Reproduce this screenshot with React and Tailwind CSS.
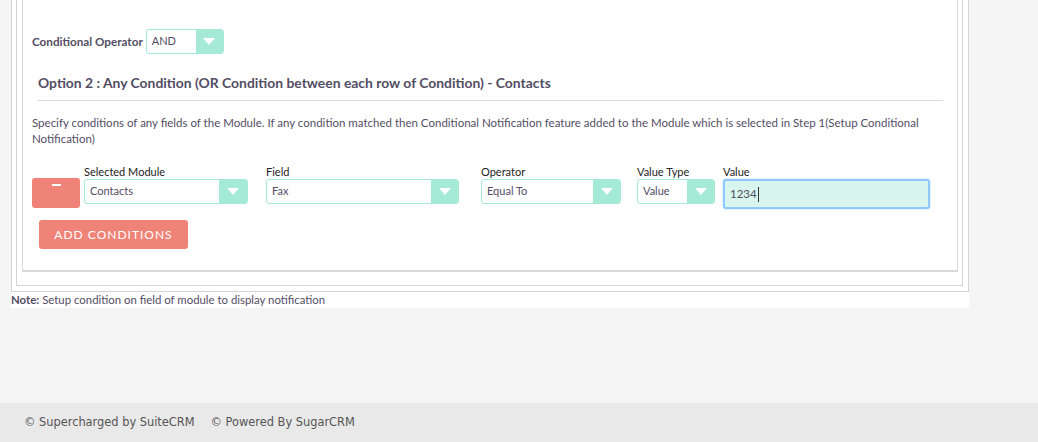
import React from "react";

const textColor = "text-[#534d64]";

function Select({ value, width, arrowWidth = 27 }) {
  return (
    <div
      className="flex h-[25px] overflow-hidden rounded-[3px] border border-[#a5e9d7] bg-white"
      style={{ width }}
    >
      <div className={`flex flex-1 items-center overflow-hidden whitespace-nowrap pl-[5px] text-[11px] ${textColor}`}>
        {value}
      </div>
      <div
        className="flex items-center justify-center bg-[#a5e9d7]"
        style={{ width: arrowWidth }}
      >
        <span className="h-0 w-0 border-x-[6px] border-t-[7px] border-x-transparent border-t-white" />
      </div>
    </div>
  );
}

function Field({ label, children, className = "" }) {
  return (
    <div className={`flex flex-col ${className}`}>
      <div className="h-[14px] text-[11px] leading-[13px] text-[#222]">{label}</div>
      {children}
    </div>
  );
}

function App() {
  return (
    <div
      className="flex min-h-[442px] flex-col bg-[#f5f5f5]"
      style={{ fontFamily: "Lato, 'Noto Sans', sans-serif" }}
    >
      <div className="ml-[11px] w-[958px] bg-white">
        {/* outer box */}
        <div className="border-x border-b border-[#d4d4d4] pb-[5px] pl-[4px] pr-[5px]">
          {/* middle box */}
          <div className="border-x border-b border-[#d4d4d4] pb-[13px] pl-[5px] pr-[4px]">
            {/* inner box */}
            <div className="h-[272px] border-x border-b-2 border-[#d9d9d9] pl-[9px] pr-[14px] pt-[29px]">
              <div className="flex items-center">
                <span className={`mr-[3px] text-[11.7px] font-bold ${textColor}`}>
                  Conditional Operator
                </span>
                <Select value="AND" width={78} />
              </div>

              <div className="ml-[6px] mt-[19px]">
                <h2 className={`text-[13.9px] font-bold leading-[20px] ${textColor}`}>
                  Option 2 : Any Condition (OR Condition between each row of Condition) - Contacts
                </h2>
                <div className="mt-[7px] h-px bg-[#dddddd]" />
              </div>

              <p className={`mt-[14px] pr-[12px] text-[11.5px] leading-[16px] ${textColor}`}>
                Specify conditions of any fields of the Module. If any condition matched then
                Conditional Notification feature added to the Module which is selected in Step
                1(Setup Conditional Notification)
              </p>

              <div className="mt-[18px] flex items-start">
                <button className="mt-[13px] flex h-[30px] w-[48px] justify-center rounded-[3px] bg-[#f08377] pt-[6px]">
                  <span className="h-[2px] w-[9px] bg-white" />
                </button>
                <Field label="Selected Module" className="ml-[4px]">
                  <Select value="Contacts" width={164} arrowWidth={28} />
                </Field>
                <Field label="Field" className="ml-[18px]">
                  <Select value="Fax" width={193} arrowWidth={27} />
                </Field>
                <Field label="Operator" className="ml-[22px]">
                  <Select value="Equal To" width={140} arrowWidth={27} />
                </Field>
                <Field label="Value Type" className="ml-[16px]">
                  <Select value="Value" width={78} arrowWidth={27} />
                </Field>
                <Field label="Value" className="ml-[8px]">
                  <div className="flex h-[30px] w-[207px] items-center rounded-[3px] border-2 border-[#8fc8fb] bg-[#d8f5ee] pl-[5px] shadow-[0_0_2px_#9fd0ff]">
                    <span className={`text-[11.5px] ${textColor}`}>1234</span>
                    <span className="ml-px h-[15px] w-px bg-[#333]" />
                  </div>
                </Field>
              </div>

              <button className="ml-[7px] mt-[11px] h-[29px] w-[149px] rounded-[3px] bg-[#f08377] text-[12px] tracking-[1px] text-white">
                ADD CONDITIONS
              </button>
            </div>
          </div>
        </div>
        <div className={`h-[16px] text-[11.4px] leading-[16px] ${textColor}`}>
          <span className="font-bold">Note:</span> Setup condition on field of module to display
          notification
        </div>
      </div>

      <div className="mt-auto flex h-[39px] items-center bg-[#e9e9e9] pl-[24px] text-[11.4px] text-[#555]"
        style={{ fontFamily: "'DejaVu Sans', sans-serif" }}
      >
        <span>© Supercharged by SuiteCRM</span>
        <span className="ml-[16px]">© Powered By SugarCRM</span>
      </div>
    </div>
  );
}

export default App;
